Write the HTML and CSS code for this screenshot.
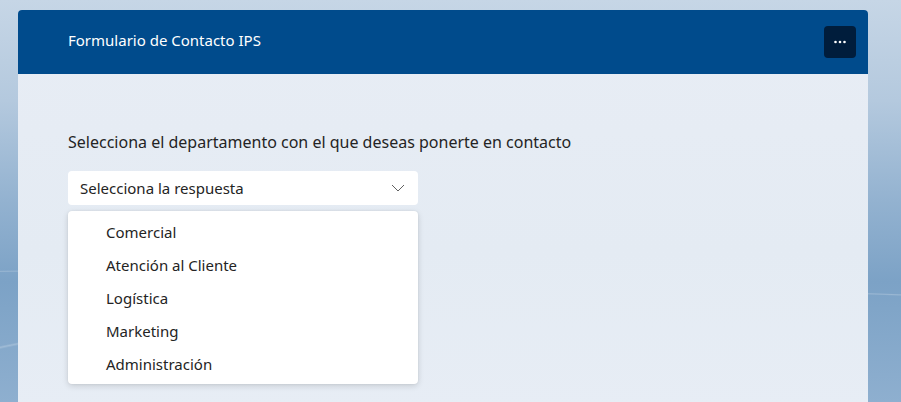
FILE: index.html
```html
<!DOCTYPE html>
<html lang="es">
<head>
<meta charset="utf-8">
<title>Formulario de Contacto IPS</title>
<link rel="stylesheet" href="styles.css">
</head>
<body>
<div class="page">
  <div class="card">
    <div class="card-header">
      <div class="title">Formulario de Contacto IPS</div>
      <button class="more-btn" aria-label="Más opciones">
        <svg width="12" height="4" viewBox="0 0 12 4"><circle cx="1.5" cy="2" r="1.3" fill="#fff"/><circle cx="6" cy="2" r="1.3" fill="#fff"/><circle cx="10.5" cy="2" r="1.3" fill="#fff"/></svg>
      </button>
    </div>
    <div class="card-body">
      <div class="question">Selecciona el departamento con el que deseas ponerte en contacto</div>
      <div class="select">
        <span class="select-text">Selecciona la respuesta</span>
        <svg class="chevron" width="14" height="8" viewBox="0 0 14 8"><path d="M1 1 L7 7 L13 1" fill="none" stroke="#616161" stroke-width="1"/></svg>
      </div>
      <ul class="options">
        <li class="option">Comercial</li>
        <li class="option">Atención al Cliente</li>
        <li class="option">Logística</li>
        <li class="option">Marketing</li>
        <li class="option">Administración</li>
      </ul>
    </div>
  </div>
</div>
</body>
</html>
```
FILE: styles.css
```css
html, body {
  margin: 0;
  height: 100%;
}
body {
  font-family: "Noto Sans", "Open Sans", sans-serif;
  color: #242424;
  overflow: hidden;
  background:
    radial-gradient(ellipse 900px 150px at 700px 440px, transparent 98.5%, rgba(255,255,255,0.22) 99.3%, transparent 100%),
    radial-gradient(ellipse 800px 130px at 60px 400px, transparent 98.5%, rgba(255,255,255,0.22) 99.3%, transparent 100%),
    linear-gradient(180deg, #c6d6e6 0%, #b4c9de 25%, #93b2d0 50%, #7ca2c6 70%, #8eafcf 100%);
}
.page {
  padding: 10px 33px 0 18px;
}
.card {
  width: 850px;
  height: 400px;
  background: linear-gradient(180deg, #e8edf5 0%, #e4ebf3 60%, #e7edf5 100%);
  border-radius: 4px 4px 0 0;
}
.card-header {
  height: 64px;
  background: #004b8c;
  border-radius: 4px 4px 0 0;
  display: flex;
  align-items: flex-start;
  justify-content: space-between;
  padding: 0 12px 0 50px;
  box-sizing: border-box;
}
.title {
  color: #ffffff;
  font-size: 15px;
  line-height: 20px;
  margin-top: 20px;
}
.more-btn {
  margin-top: 16px;
  width: 32px;
  height: 32px;
  border: none;
  border-radius: 4px;
  background: #001d3c;
  display: flex;
  align-items: center;
  justify-content: center;
  padding: 0;
}
.card-body {
  padding: 56px 50px 0 50px;
}
.question {
  font-size: 16px;
  line-height: 24px;
  color: #242424;
}
.select {
  margin-top: 17px;
  width: 350px;
  height: 34px;
  box-sizing: border-box;
  background: #ffffff;
  border-radius: 4px;
  display: flex;
  align-items: center;
  justify-content: space-between;
  padding: 0 12px 0 12px;
}
.select-text {
  font-size: 15px;
}
.chevron {
  margin-right: 1px;
}
.options {
  list-style: none;
  margin: 6px 0 0 0;
  padding: 5px 0 3px 0;
  width: 350px;
  background: #ffffff;
  border-radius: 4px;
  box-shadow: 0 2px 6px rgba(0, 0, 0, 0.14), 0 0 2px rgba(0, 0, 0, 0.08);
}
.option {
  height: 33px;
  line-height: 33px;
  padding-left: 38px;
  font-size: 15px;
}
```
